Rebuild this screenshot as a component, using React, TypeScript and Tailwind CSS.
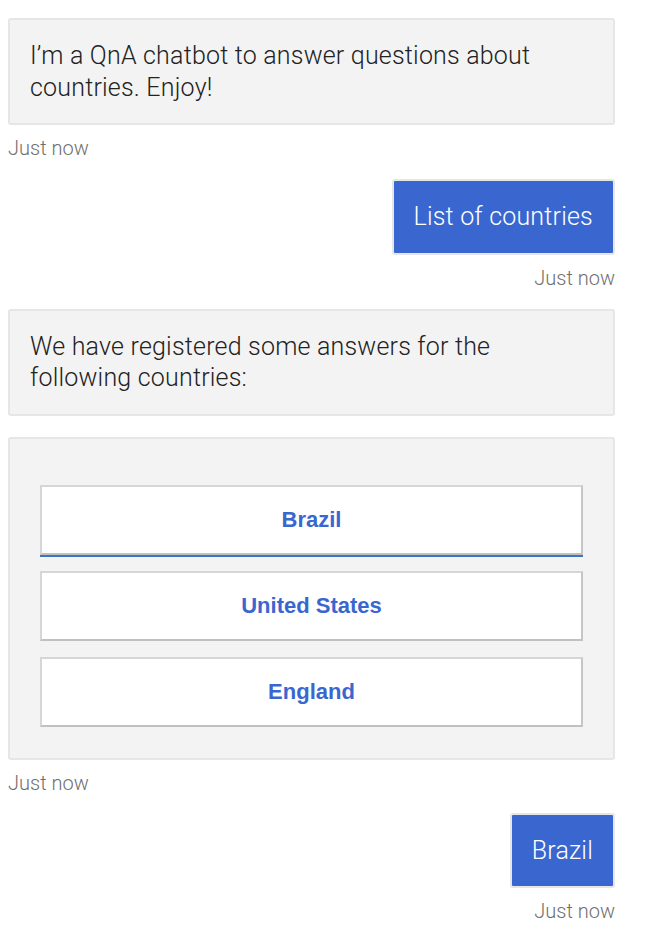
const font = { fontFamily: 'Roboto, "Helvetica Neue", Arial, sans-serif' };

function Stamp({ right }: { right?: boolean }) {
  return (
    <div
      className={`mt-[9px] text-[20px] leading-[28px] font-light text-[#6f6f6f] ${right ? "text-right" : ""}`}
    >
      Just now
    </div>
  );
}

function BotBubble({ children }: { children: React.ReactNode }) {
  return (
    <div className="rounded-[3px] border-2 border-[#e6e6e6] bg-[#f3f3f3] p-[20px] text-[25px] leading-[31.5px] font-light tracking-[0.2px] text-[#222]">
      {children}
    </div>
  );
}

function UserBubble({ children }: { children: React.ReactNode }) {
  return (
    <div className="flex justify-end">
      <div className="rounded-[3px] border-2 border-[#e6e6e6] bg-[#3a67cf] p-[20px] text-[25px] leading-[31.5px] font-light tracking-[0.2px] text-white">
        {children}
      </div>
    </div>
  );
}

const countries = ["Brazil", "United States", "England"];

export default function App() {
  return (
    <div className="min-h-screen bg-white pl-[8px] pr-[35px] pt-[18px]" style={font}>
      <div>
        <BotBubble>I’m a QnA chatbot to answer questions about countries. Enjoy!</BotBubble>
        <Stamp />
      </div>

      <div className="mt-[17px]">
        <UserBubble>List of countries</UserBubble>
        <Stamp right />
      </div>

      <div className="mt-[17px]">
        <BotBubble>We have registered some answers for the following countries:</BotBubble>
        <div className="mt-[21px] rounded-[3px] border-2 border-[#e6e6e6] bg-[#f3f3f3] px-[30px] pt-[46px] pb-[31px]">
          <div className="flex flex-col gap-[16px]">
            {countries.map((c, i) => (
              <button
                key={c}
                className={`h-[70px] w-full border-2 border-[#d6d6d6] border-r-[#c6c6c6] border-b-[#c0c0c0] bg-white text-[22px] font-bold text-[#3a67cf] ${
                  i === 0 ? "shadow-[0_2px_0_#3b76bd]" : ""
                }`}
                style={{ fontFamily: '"Liberation Sans", Arial, sans-serif' }}
              >
                {c}
              </button>
            ))}
          </div>
        </div>
        <Stamp />
      </div>

      <div className="mt-[16px]">
        <UserBubble>Brazil</UserBubble>
        <Stamp right />
      </div>
    </div>
  );
}
